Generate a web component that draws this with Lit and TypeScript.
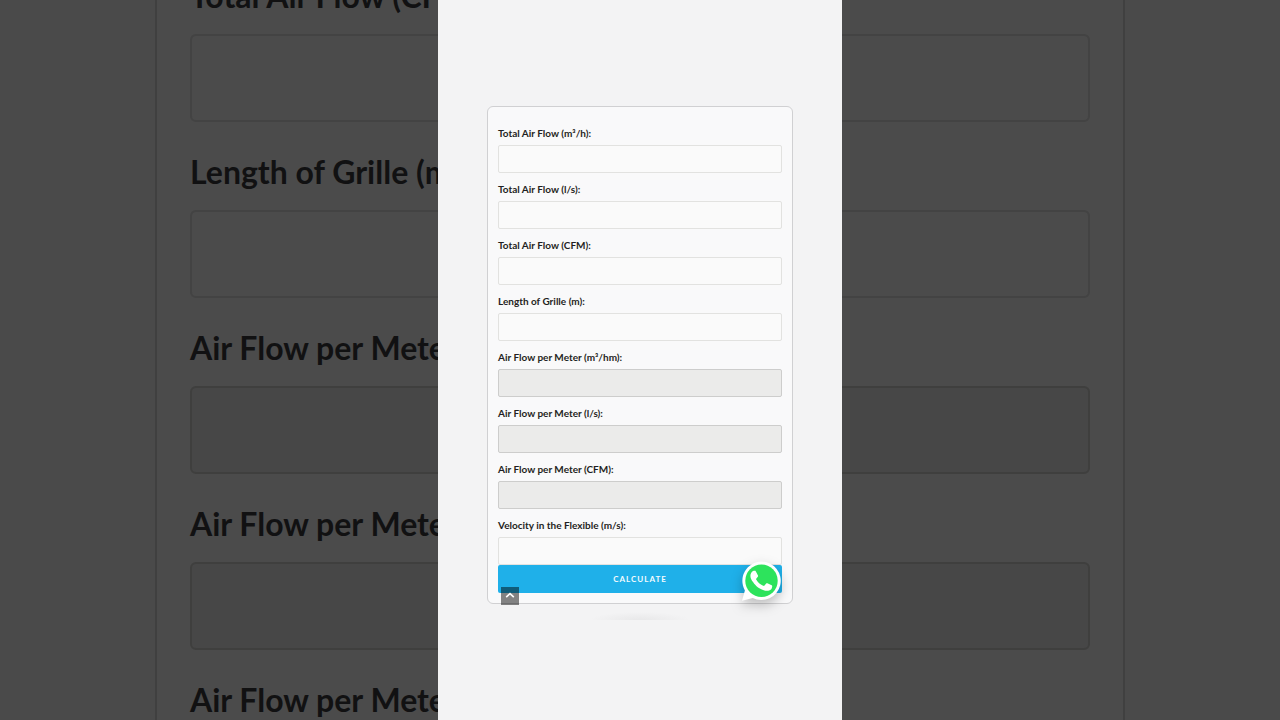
import { LitElement, html, css } from "lit";
import { customElement, property } from "lit/decorators.js";

interface Field {
  id: string;
  label: string;
  output?: boolean;
}

const FIELDS: Field[] = [
  { id: "total-m3h", label: "Total Air Flow (m³/h):" },
  { id: "total-ls", label: "Total Air Flow (l/s):" },
  { id: "total-cfm", label: "Total Air Flow (CFM):" },
  { id: "length", label: "Length of Grille (m):" },
  { id: "meter-m3h", label: "Air Flow per Meter (m³/hm):", output: true },
  { id: "meter-ls", label: "Air Flow per Meter (l/s):", output: true },
  { id: "meter-cfm", label: "Air Flow per Meter (CFM):", output: true },
  { id: "velocity", label: "Velocity in the Flexible (m/s):" },
];

@customElement("flow-calculator")
export class FlowCalculator extends LitElement {
  /** "regular" for the form in use, "large" for the dimmed backdrop. */
  @property({ reflect: true }) size = "regular";

  static styles = css`
    :host {
      display: block;
      --text: 10px;
      --line: 16px;
      --label-gap: 4px;
      --row-gap: 8px;
      --field: 28px;
      --pad: 18px 10px 10px;
      --stroke: 1px;
      --radius: 6px;
      --field-radius: 2px;
      --card: #f9f9fa;
      --edge: #d0d0d2;
      --ink: #1f1f22;
      --input: #fafafa;
      --input-edge: #e2e2e0;
      --output: #ebebea;
      --output-edge: #cdcdcc;
    }
    :host([size="large"]) {
      --text: 32px;
      --line: 40px;
      --label-gap: 18px;
      --row-gap: 30px;
      --field: 88px;
      --pad: 66px 33px 34px;
      --stroke: 2px;
      --radius: 18px;
      --field-radius: 6px;
      --card: #4b4b4b;
      --edge: #404040;
      --ink: #111112;
      --input: #4b4b4b;
      --input-edge: #434343;
      --output: #474747;
      --output-edge: #3f3f3e;
    }
    .card {
      box-sizing: border-box;
      padding: var(--pad);
      background: var(--card);
      border: var(--stroke) solid var(--edge);
      border-radius: var(--radius);
    }
    .rows {
      display: grid;
      gap: var(--row-gap);
    }
    .row {
      display: grid;
      gap: var(--label-gap);
    }
    label {
      font: 700 var(--text) / var(--line) Lato, "Century Gothic", sans-serif;
      color: var(--ink);
      white-space: nowrap;
    }
    input {
      box-sizing: border-box;
      width: 100%;
      min-width: 0;
      height: var(--field);
      margin: 0;
      padding: 0 8px;
      font: 400 var(--text) Lato, sans-serif;
      color: var(--ink);
      background: var(--input);
      border: var(--stroke) solid var(--input-edge);
      border-radius: var(--field-radius);
      outline: none;
    }
    input.output {
      background: var(--output);
      border-color: var(--output-edge);
    }
    button {
      display: block;
      width: 100%;
      height: var(--field);
      padding: 0;
      border: 0;
      border-radius: var(--field-radius);
      background: #1fb0e9;
      color: #f4fbfe;
      font: 700 8px / 16px Lato, "Century Gothic", sans-serif;
      letter-spacing: 1px;
      cursor: pointer;
    }
  `;

  render() {
    return html`
      <form class="card" @submit=${(e: Event) => e.preventDefault()}>
        <div class="rows">
          ${FIELDS.map(
            (f) => html`
              <div class="row">
                <label for=${f.id}>${f.label}</label>
                <input id=${f.id} type="text" class=${f.output ? "output" : ""} ?readonly=${!!f.output} />
              </div>
            `
          )}
        </div>
        <button type="submit">CALCULATE</button>
      </form>
    `;
  }
}

@customElement("app-root")
export class AppRoot extends LitElement {
  static styles = css`
    :host {
      display: grid;
      justify-items: center;
      position: relative;
      height: 100vh;
      overflow: hidden;
      background: #4a4a4a;
    }
    .backdrop {
      position: absolute;
      inset: 0;
      display: flex;
      align-items: center;
      justify-content: center;
      padding-bottom: 38px;
      overflow: hidden;
    }
    .backdrop flow-calculator {
      flex: none;
      width: 970px;
      max-width: 76%;
    }
    .screen {
      position: relative;
      box-sizing: border-box;
      height: 100vh;
      aspect-ratio: 101 / 180;
      display: flex;
      flex-direction: column;
      justify-content: center;
      padding: 0 49px 10px;
      background: #f3f3f4;
    }
    .panel {
      position: relative;
    }
    .smudge {
      position: absolute;
      top: 100%;
      left: 50%;
      width: 100px;
      height: 16px;
      transform: translateX(-50%);
      background: radial-gradient(ellipse 50% 50% at 50% 100%, #e8e8e9, #f3f3f4);
    }
    .top {
      position: absolute;
      left: 14px;
      bottom: -1px;
      display: grid;
      place-items: center;
      width: 18px;
      height: 18px;
      background: rgba(0, 0, 0, 0.48);
    }
    .chat {
      position: absolute;
      right: 11px;
      bottom: 2px;
      width: 42px;
      height: 42px;
      filter: drop-shadow(0 5px 6px rgba(0, 0, 0, 0.25));
    }
    svg {
      display: block;
    }
  `;

  render() {
    return html`
      <div class="backdrop" aria-hidden="true" inert>
        <flow-calculator size="large"></flow-calculator>
      </div>
      <main class="screen">
        <div class="panel">
          <flow-calculator></flow-calculator>
          <div class="smudge"></div>
          <a class="top" href="#top" aria-label="Back to top">
            <svg width="18" height="18" viewBox="0 0 18 18" fill="none" stroke="#fff" stroke-width="1.6">
              <path d="M5.200 10.200 9 6.600l3.800 3.600" />
            </svg>
          </a>
          <a class="chat" href="#chat" aria-label="Chat on WhatsApp">
            <svg width="42" height="42" viewBox="0 0 42 42">
              <path fill="#fff" d="M21.500 1.500a19.300 19.300 0 1 1-8.800 36.500L2 40.700l2.900-10.300A19.300 19.300 0 0 1 21.500 1.500Z" />
              <circle cx="21.500" cy="20.800" r="16.200" fill="#2de35c" />
              <path
                fill="#fff"
                d="M16 11.700c-.4-.9-.8-.9-1.200-.9h-1c-.4 0-1 .2-1.500.7s-1.900 1.800-1.900 4.400 1.900 5.200 2.200 5.500c.3.400 3.700 5.900 9.200 8 4.500 1.800 5.500 1.400 6.400 1.300 1-.1 3.200-1.300 3.600-2.500.5-1.300.5-2.300.3-2.500-.1-.3-.5-.4-1-.7l-3.700-1.700c-.5-.2-.8-.3-1.200.3l-1.700 2c-.3.400-.6.400-1.200.2-.5-.3-2.200-.8-4.200-2.600-1.600-1.400-2.600-3.100-2.900-3.600-.3-.6 0-.8.200-1.100l1.600-1.900c.2-.4.1-.7 0-1Z"
              />
            </svg>
          </a>
        </div>
      </main>
    `;
  }
}
